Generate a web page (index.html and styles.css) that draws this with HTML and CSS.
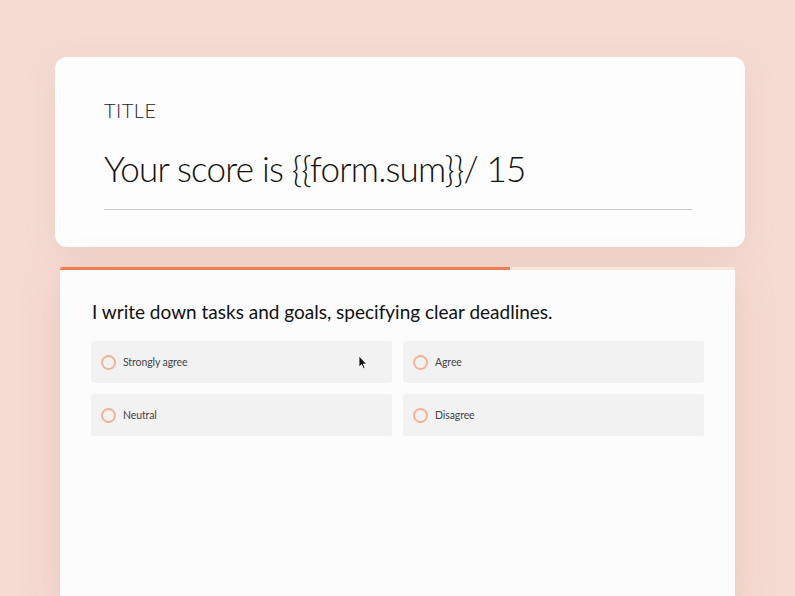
FILE: index.html
```html
<!DOCTYPE html>
<html>
<head>
<meta charset="utf-8">
<link rel="stylesheet" href="styles.css">
</head>
<body>
<div class="page">
  <section class="title-card">
    <div class="label">TITLE</div>
    <div class="score">Your score is {{form.sum}}/ 15</div>
    <div class="rule"></div>
  </section>
  <section class="question-card">
    <div class="progress"><div class="progress-fill" style="width: 450px"></div></div>
    <div class="question-body">
      <h2 class="question">I write down tasks and goals, specifying clear deadlines.</h2>
      <div class="options">
        <div class="option"><span class="radio"></span><span class="opt-text">Strongly agree</span>
          <svg class="cursor" width="10" height="15" viewBox="0 0 10 15"><path d="M1 1 L1 12 L3.6 9.6 L5.4 13.6 L7 12.9 L5.3 9 L8.6 9 Z" fill="#111" stroke="#fff" stroke-width="0.8"/></svg>
        </div>
        <div class="option"><span class="radio"></span><span class="opt-text">Agree</span></div>
        <div class="option"><span class="radio"></span><span class="opt-text">Neutral</span></div>
        <div class="option"><span class="radio"></span><span class="opt-text">Disagree</span></div>
      </div>
    </div>
  </section>
</div>
</body>
</html>
```
FILE: styles.css
```css
* { box-sizing: border-box; }
html, body { margin: 0; padding: 0; }
body {
  background: #f5dbd2;
  font-family: "Lato", "Open Sans", sans-serif;
  width: 795px;
  height: 596px;
  overflow: hidden;
}
.page {
  padding-top: 57px;
  display: flex;
  flex-direction: column;
  align-items: flex-start;
}
.title-card {
  margin-left: 55px;
  width: 690px;
  height: 190px;
  background: #fdfdfd;
  border-radius: 12px;
  padding: 41px 53px 0 49px;
  box-shadow: 0 8px 30px rgba(200, 150, 135, 0.15);
}
.label {
  font-size: 20px;
  font-weight: 300;
  color: #222;
  letter-spacing: 0.5px;
  line-height: 24px;
}
.score {
  margin-top: 24px;
  font-size: 35px;
  font-weight: 300;
  color: #111;
  line-height: 44px;
  letter-spacing: -0.8px;
}
.rule {
  margin-top: 19px;
  height: 1px;
  background: #c8c8c8;
}
.question-card {
  margin-top: 20px;
  margin-left: 60px;
  width: 675px;
  height: 340px;
  background: #fcfcfc;
  box-shadow: 0 10px 40px rgba(190, 140, 125, 0.22);
  border-radius: 3px 3px 0 0;
}
.progress {
  height: 3px;
  background: #f9e6df;
  border-radius: 2px 2px 0 0;
  overflow: hidden;
}
.progress-fill {
  height: 3px;
  background: #f47a52;
}
.question-body {
  padding: 30px 31px 0 31px;
}
.question {
  margin: 0;
  font-size: 19px;
  font-weight: 400;
  color: #111;
  line-height: 24px;
  padding-left: 1px;
}
.options {
  margin-top: 17px;
  display: grid;
  grid-template-columns: 301px 301px;
  column-gap: 11px;
  row-gap: 11px;
}
.option {
  position: relative;
  height: 42px;
  background: #f2f2f2;
  border-radius: 3px;
  display: flex;
  align-items: center;
  padding-left: 10px;
}
.radio {
  width: 15px;
  height: 15px;
  border: 2px solid #f3b198;
  border-radius: 50%;
  flex: none;
}
.opt-text {
  margin-left: 7px;
  font-size: 10.5px;
  font-weight: 400;
  color: #444;
  letter-spacing: -0.1px;
}
.cursor {
  position: absolute;
  left: 267px;
  top: 14px;
}
```
